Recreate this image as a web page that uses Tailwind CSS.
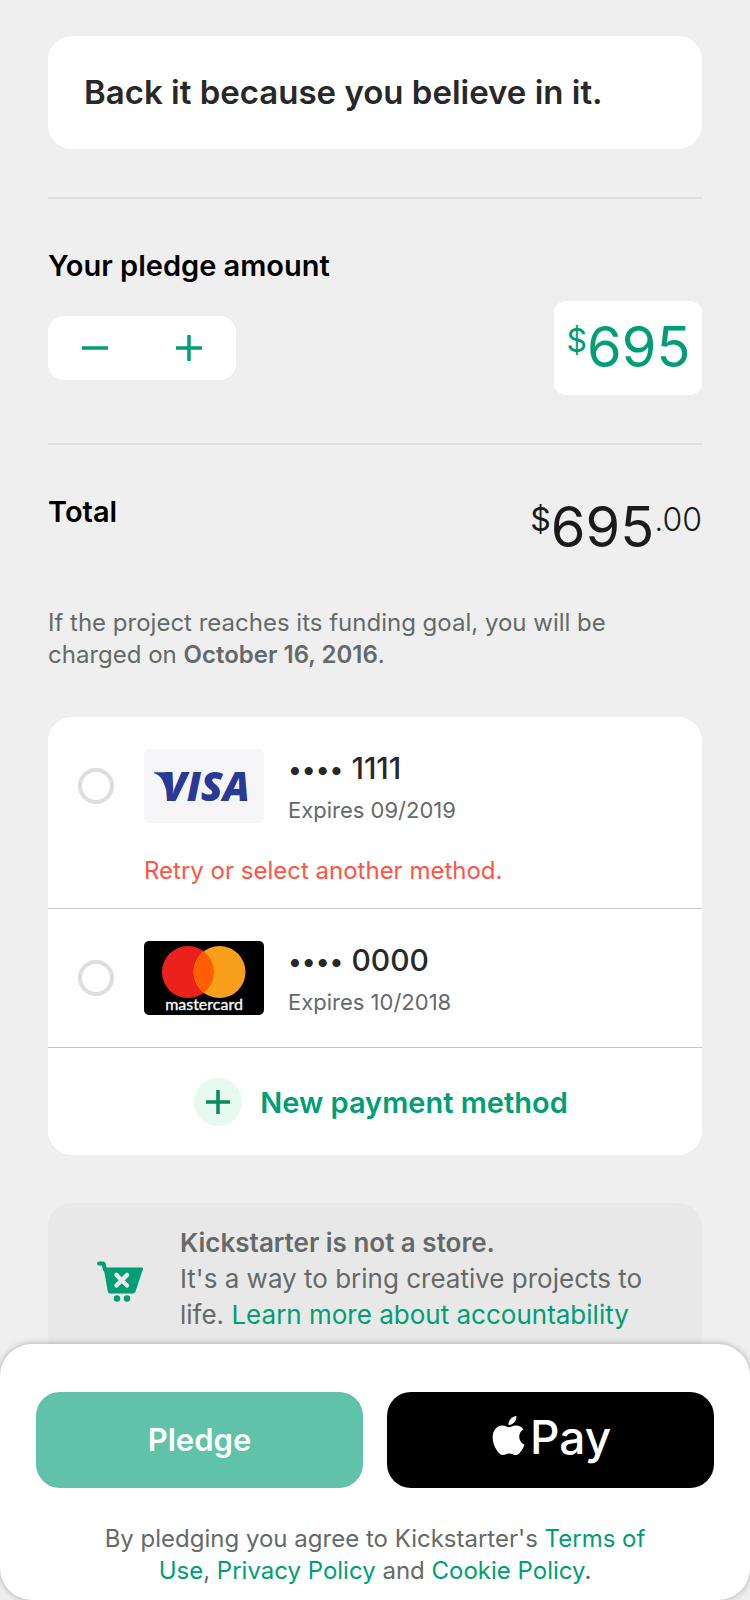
<!DOCTYPE html>
<html lang="en">
<head>
<meta charset="utf-8">
<meta name="viewport" content="width=device-width, initial-scale=1">
<title>Pledge</title>
<script src="https://cdn.jsdelivr.net/npm/@tailwindcss/browser@4"></script>
</head>
<body class="flex min-h-screen flex-col bg-[#efefef] font-['Inter',sans-serif] text-[#282828]">
<main class="flex flex-col px-12 pt-9">
  <section class="rounded-3xl bg-white px-9 pt-[31px] pb-8">
    <h1 class="text-[33px] leading-[50px] font-semibold">Back it because you believe in it.</h1>
  </section>

  <section class="mt-12 border-t-2 border-[#dcdedd] pt-[47px]">
    <h2 class="text-[29px] leading-10 font-semibold text-black">Your pledge amount</h2>
    <div class="mt-[15px] flex items-center justify-between">
      <div class="flex h-16 rounded-2xl bg-white">
        <button type="button" aria-label="Decrease pledge" class="flex w-[94px] items-center justify-center">
          <svg width="28" height="28" viewBox="0 0 28 28" fill="none" stroke="#009e74" stroke-width="3.5"><path d="M1 14h26"/></svg>
        </button>
        <button type="button" aria-label="Increase pledge" class="flex w-[94px] items-center justify-center">
          <svg width="28" height="28" viewBox="0 0 28 28" fill="none" stroke="#009e74" stroke-width="3.5"><path d="M1 14h26M14 1v26"/></svg>
        </button>
      </div>
      <label class="flex h-[94px] items-start rounded-xl bg-white px-3 text-[#009e74]">
        <span class="pt-5 text-[32px] leading-10">$</span>
        <input type="text" inputmode="numeric" aria-label="Pledge amount" value="695" class="h-[92px] w-[103px] bg-transparent text-right text-[56px] outline-none">
      </label>
    </div>
  </section>

  <section class="mt-12 flex items-start justify-between border-t-2 border-[#dcdedd] pt-[47px]">
    <h2 class="text-[29px] leading-10 font-semibold text-black">Total</h2>
    <p class="flex items-start pt-1.5 text-[#1b1b1b]">
      <span class="pt-0.5 text-[32px] leading-10">$</span>
      <span class="text-[56px] leading-[58px]">695</span>
      <span class="pt-0.5 text-[32px] leading-10 font-light">.00</span>
    </p>
  </section>

  <p class="mt-[51px] text-[24px] leading-8 text-[#656969]">If the project reaches its funding goal, you will be<br>charged on <strong class="font-semibold">October 16, 2016</strong>.</p>

  <section class="mt-[46px] rounded-3xl bg-white">
    <div class="border-b border-[#c6c6c6] pr-6 pb-[21px] pl-[30px]">
      <label class="flex items-center pt-[25px]">
        <input type="radio" name="card" class="size-9 shrink-0 appearance-none rounded-full border-4 border-[#dcdedd] checked:border-[#009e74]">
        <svg class="mr-6 ml-[30px] shrink-0" width="120" height="74" viewBox="0 0 120 74" role="img" aria-label="Visa">
          <rect width="120" height="74" rx="5" fill="#f6f6f9"/>
          <text x="18" y="52" font-family="Open Sans" font-weight="800" font-style="italic" font-size="40" fill="#2a3896">VISA</text>
          <path d="M10 23.200h17l2 18-5 4-4-10.500c-1.500-4.500-4-8.500-10-10.500z" fill="#2a3896"/>
        </svg>
        <span class="flex flex-col pt-1.5">
          <span class="text-[30px] leading-10 font-medium"><span class="text-[26px] leading-none">••••</span> 1111</span>
          <span class="mt-0.5 text-[22px] leading-10 text-[#656969]">Expires 09/2019</span>
        </span>
      </label>
      <p class="mt-[25px] pl-[66px] text-[24px] leading-8 text-[#ff5544]">Retry or select another method.</p>
    </div>
    <div class="border-b border-[#c6c6c6] pr-6 pb-[25px] pl-[30px]">
      <label class="flex items-center pt-[25px]">
        <input type="radio" name="card" class="size-9 shrink-0 appearance-none rounded-full border-4 border-[#dcdedd] checked:border-[#009e74]">
        <svg class="mr-6 ml-[30px] shrink-0" width="120" height="74" viewBox="0 0 120 74" role="img" aria-label="Mastercard">
          <rect width="120" height="74" rx="5" fill="#000"/>
          <circle cx="44" cy="31" r="26" fill="#eb211c"/>
          <circle cx="75.500" cy="31" r="26" fill="#f89f1b"/>
          <path d="M59.750 10.310a26 26 0 0 1 0 41.380a26 26 0 0 1 0-41.380z" fill="#ff5f00"/>
          <text x="60" y="69" text-anchor="middle" font-family="Lato" font-weight="400" font-size="16" fill="#fff" stroke="#fff" stroke-width=".3">mastercard</text>
        </svg>
        <span class="flex flex-col pt-1.5">
          <span class="text-[30px] leading-10 font-medium"><span class="text-[26px] leading-none">••••</span> 0000</span>
          <span class="mt-0.5 text-[22px] leading-10 text-[#656969]">Expires 10/2018</span>
        </span>
      </label>
    </div>
    <button type="button" class="flex w-full items-center justify-center gap-[18px] pt-[30px] pb-[29px] pl-3 text-[#009e74]">
      <svg width="48" height="48" viewBox="0 0 48 48" fill="none"><circle cx="24" cy="24" r="24" fill="#e6faf1"/><path d="M12 24h24M24 12v24" stroke="#088a5c" stroke-width="3.500"/></svg>
      <span class="pt-0.5 text-[29px] leading-10 font-semibold">New payment method</span>
    </button>
  </section>

  <section class="mt-12 flex items-start rounded-3xl bg-[#e8e8e8] pt-[22px] pr-6 pb-7 pl-12">
    <svg class="mt-9 mr-9 shrink-0" width="48" height="42" viewBox="0 0 48 42" role="img" aria-label="Not a store">
      <path d="M3 2.500h4.500l1.500 6" fill="none" stroke="#009e74" stroke-width="4" stroke-linecap="round" stroke-linejoin="round"/>
      <path d="M7.500 6.500H45.500q2 0 1.300 2L39.500 30.500q-.7 2-2.500 2H14q-1.800 0-2.200-2z" fill="#009e74"/>
      <path d="M20.500 14l10.500 10.500M31 14L20.500 24.500" stroke="#e8e8e8" stroke-width="4.500" stroke-linecap="round"/>
      <circle cx="21" cy="37.500" r="3.200" fill="#009e74"/><circle cx="31" cy="37.500" r="3.200" fill="#009e74"/>
    </svg>
    <p class="text-[26px] leading-9 text-[#656969]"><strong class="font-semibold">Kickstarter is not a store.</strong><br>It's a way to bring creative projects to<br>life. <a href="#" class="text-[#009e74]">Learn more about accountability</a></p>
  </section>
</main>

<footer class="relative z-10 -mt-[17px] rounded-[32px] bg-white px-9 pt-12 pb-[13px] shadow-[0_0_6px_rgba(0,0,0,0.3)]">
  <div class="grid grid-cols-2 gap-6">
    <button type="button" class="h-24 rounded-3xl bg-[#5fc2a9] text-[31px] font-semibold text-white">Pledge</button>
    <button type="button" class="flex h-24 items-center justify-center rounded-3xl bg-black">
      <svg class="overflow-visible" width="124" height="52" viewBox="0 0 124 52" role="img" aria-label="Apple Pay" fill="#fff">
        <path transform="translate(0 2) scale(1.630)" d="M12.152 6.896c-.948 0-2.415-1.078-3.960-1.040-2.040.027-3.910 1.183-4.961 3.014-2.117 3.675-.546 9.103 1.519 12.090 1.013 1.454 2.208 3.090 3.792 3.039 1.520-.065 2.090-.987 3.935-.987 1.831 0 2.350.987 3.960.948 1.637-.026 2.676-1.480 3.676-2.948 1.156-1.688 1.636-3.325 1.662-3.415-.039-.013-3.182-1.221-3.220-4.857-.026-3.040 2.480-4.494 2.597-4.559-1.429-2.090-3.623-2.324-4.390-2.376-2-.156-3.675 1.090-4.610 1.090zM15.530 3.830c.843-1.012 1.400-2.427 1.245-3.830-1.207.052-2.662.805-3.532 1.818-.780.896-1.454 2.338-1.273 3.714 1.338.104 2.715-.688 3.559-1.701"/>
        <text x="41" y="40" font-family="Inter" font-weight="500" font-size="46">Pay</text>
      </svg>
    </button>
  </div>
  <p class="mt-[35px] text-center text-[24px] leading-8 text-[#656969]">By pledging you agree to Kickstarter's <a href="#" class="text-[#009e74]">Terms of</a><br><a href="#" class="text-[#009e74]">Use</a>, <a href="#" class="text-[#009e74]">Privacy Policy</a> and <a href="#" class="text-[#009e74]">Cookie Policy</a>.</p>
</footer>
</body>
</html>
